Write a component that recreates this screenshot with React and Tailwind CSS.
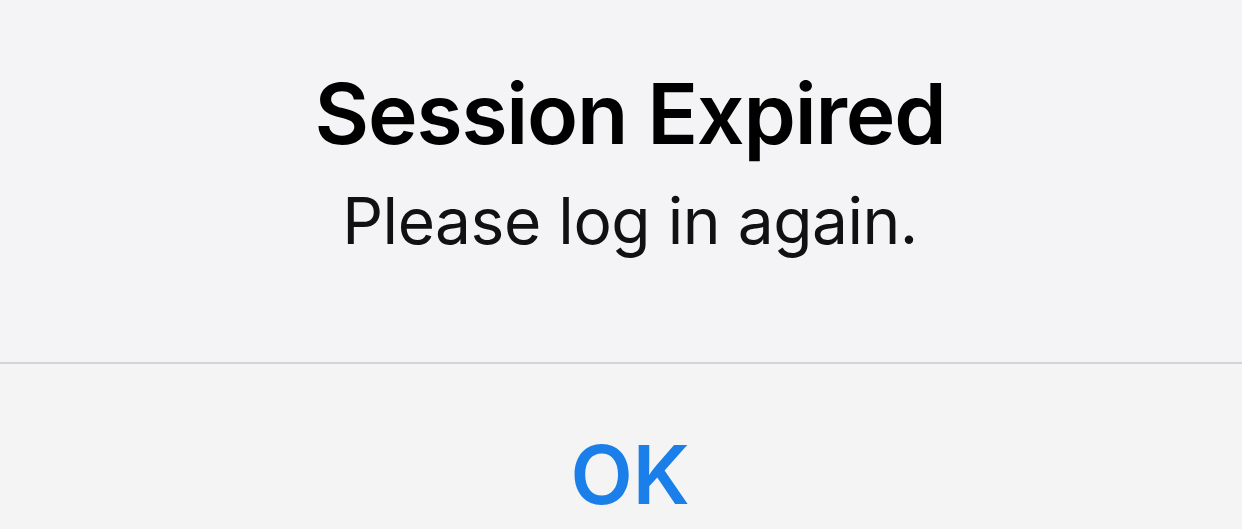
import React from 'react';

const SessionAlert = () => {
  return (
    <div className="w-[1242px] h-[529px] overflow-hidden bg-[#f4f4f6] flex flex-col font-['Inter','Noto_Sans',sans-serif]">
      <div className="h-[362px] flex flex-col items-center pl-[18px] pt-[64px]">
        <h1 className="text-[84px] leading-[100px] font-semibold text-black tracking-[-1.2px]">
          Session Expired
        </h1>
        <p className="mt-[17px] text-[64px] leading-[80px] font-normal text-[#111] tracking-[-0.45px]">
          Please log in again.
        </p>
      </div>
      <div className="h-[2px] bg-[#d4d3d8]" />
      <button
        type="button"
        className="flex justify-center pl-[18px] pt-[61px] bg-[#f4f4f5]"
      >
        <span className="text-[81px] leading-[100px] font-semibold text-[#1a7fe8]">OK</span>
      </button>
    </div>
  );
};

export default function App() {
  return <SessionAlert />;
}
